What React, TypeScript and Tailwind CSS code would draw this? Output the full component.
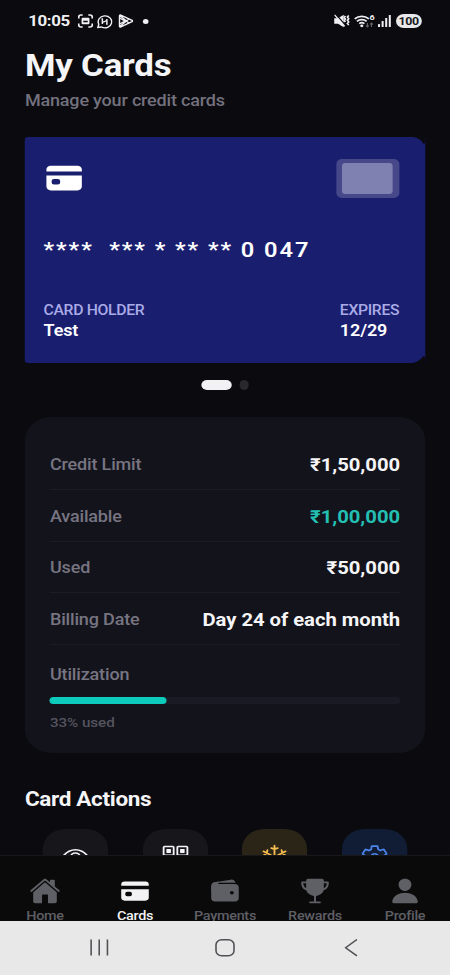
import React from 'react';
import {
  IoCard,
  IoEyeOutline,
  IoHome,
  IoPerson,
  IoQrCodeOutline,
  IoSettingsOutline,
  IoSnowOutline,
  IoTrophy,
  IoWallet,
} from 'react-icons/io5';

const DETAILS = [
  { label: 'Credit Limit', value: '₹1,50,000', color: 'text-[#f5f5f7]' },
  { label: 'Available', value: '₹1,00,000', color: 'text-[#22bfb2]' },
  { label: 'Used', value: '₹50,000', color: 'text-[#f5f5f7]' },
  { label: 'Billing Date', value: 'Day 24 of each month', color: 'text-[#f5f5f7]' },
];

const ACTIONS = [
  { id: 'view', Icon: IoEyeOutline, style: 'bg-[#16161b] text-[#f5f5f7]' },
  { id: 'qr', Icon: IoQrCodeOutline, style: 'bg-[#16161b] text-[#f5f5f7]' },
  { id: 'freeze', Icon: IoSnowOutline, style: 'bg-[#2b2518] text-[#f7bd50]' },
  { id: 'settings', Icon: IoSettingsOutline, style: 'bg-[#111d35] text-[#4a86ee]' },
];

const TABS = [
  { label: 'Home', Icon: IoHome },
  { label: 'Cards', Icon: IoCard },
  { label: 'Payments', Icon: IoWallet },
  { label: 'Rewards', Icon: IoTrophy },
  { label: 'Profile', Icon: IoPerson },
];

const StatusBar = () => (
  <div className="flex h-[42px] shrink-0 items-center justify-between px-[25px] text-[#f0f0f2]">
    <div className="flex items-center">
      <span className="w-[38px] text-[15px] leading-[42px] font-bold tracking-[-0.3px]">10:05</span>
      <svg className="ml-[5.500px] h-[14px] w-[14px]" viewBox="0 0 14 14" fill="none" stroke="currentColor" strokeWidth="1.5">
        <path d="M1 4.500V3a2 2 0 0 1 2-2h1.500M9.500 1H11a2 2 0 0 1 2 2v1.500M13 9.500V11a2 2 0 0 1-2 2H9.500M4.500 13H3a2 2 0 0 1-2-2V9.500" />
        <rect x="3.500" y="3.800" width="7" height="6.400" rx="1" fill="currentColor" stroke="none" />
        <path d="M5 7.500h4" stroke="#0a0a0f" strokeWidth="1.400" />
      </svg>
      <svg className="ml-[3px] h-[15px] w-[14px]" viewBox="0 0 14 15" fill="none" stroke="currentColor" strokeWidth="1.3">
        <path d="M1 13.5l.8-3.3A6 6 0 1 1 4.3 13z" />
        <path d="M5 5v5M9 5v5M5 8.5l4-2M4.200 5h1.400M8.300 10h1.400" />
      </svg>
      <svg className="ml-[5px] h-[14px] w-[14px]" viewBox="0 0 14 14" fill="none" stroke="currentColor" strokeWidth="1.3" strokeLinejoin="round">
        <path d="M1.200 1.800v10.400a.8.8 0 0 0 1.200.7l10-5.300a.7.7 0 0 0 0-1.200L2.400 1.100a.8.8 0 0 0-1.200.7zM1.500 1.500L9.500 9M1.500 12.500L9.500 5M1.500 4L6 7 1.500 10" />
      </svg>
      <span className="ml-[8px] h-[5px] w-[5px] rounded-full bg-current" />
    </div>
    <div className="flex items-center">
      <svg className="h-[14px] w-[14px]" viewBox="0 0 14 14" fill="none" stroke="currentColor" strokeWidth="1.5">
        <path d="M0 4.300h3.500L8.500 .8v12.400L3.500 9.700H0z" fill="currentColor" stroke="none" />
        <path d="M1.200 0l9 11.300" stroke="#0a0a0f" strokeWidth="1.200" />
        <path d="M.4 .8l9 11.500" strokeWidth="1.200" />
        <path d="M10 2l-1 1.500 1 1.500-1 1.500 1 1.500M13 1.500l-1.200 1.600 1.200 1.600-1.200 1.600 1.200 1.600-1.200 1.600 1.200 1.600" />
      </svg>
      <svg className="ml-[4px] h-[18px] w-[19px] overflow-visible" viewBox="0 -2 19 18" fill="none" stroke="currentColor" strokeWidth="1.600">
        <path d="M.3 4.800a9.300 9.300 0 0 1 12.600 0M2.300 7.300a6.400 6.400 0 0 1 8.600 0M4.300 9.600a3.600 3.600 0 0 1 4.600 0" />
        <circle cx="6.600" cy="11.800" r="1.400" fill="currentColor" stroke="none" />
        <path d="M11.600 9v4M10.300 11.500l1.300 1.500 1.300-1.500M15.200 13V9M14 10.500L15.200 9l1.300 1.500" stroke="#66666b" strokeWidth="1" />
        <text x="13.400" y="6" fill="currentColor" stroke="none" className="text-[8px] font-bold">6</text>
      </svg>
      <svg className="ml-[2px] h-[12px] w-[12px]" viewBox="0 0 12 12" fill="currentColor">
        <rect x="0" y="9" width="1.800" height="3" rx=".5" />
        <rect x="3.200" y="6" width="1.800" height="6" rx=".5" />
        <rect x="6.400" y="3" width="1.800" height="9" rx=".5" />
        <rect x="9.600" y="0" width="1.800" height="12" rx=".5" />
      </svg>
      <span className="ml-[4px] flex h-[14px] w-[23.500px] items-center justify-center rounded-full bg-[#e9e9eb] text-[11px] leading-none font-bold tracking-[-0.3px] text-[#18181b]">
        100
      </span>
    </div>
  </div>
);

const CreditCard = () => (
  <div className="relative mt-[26px] flex h-[225.500px] shrink-0 flex-col rounded-l-[3px] bg-[#1a1e6f] px-[16.500px]">
    <svg className="absolute top-0 right-0 h-[7px] w-[11px]" viewBox="0 0 11 7" fill="#0a0a0f">
      <path d="M0 0h11v6l-1.500 1C7.500 3 4.500 .8 0 0z" />
    </svg>
    <svg className="absolute right-0 bottom-0 h-[7px] w-[11px]" viewBox="0 0 11 7" fill="#0a0a0f">
      <path d="M0 7h11V1L9.500 0C7.500 3 4 6 0 7z" />
    </svg>
    <div className="flex justify-between pt-[22px]">
      <IoCard className="mt-[1px] h-[36px] w-[36px] text-white" />
      <div className="mr-[6.500px] h-[39px] w-[56px] rounded-[5px] bg-[#46488a] px-[5.500px] py-[4px]">
        <div className="h-full rounded-[3px] bg-[#7f81b0]" />
      </div>
    </div>
    <div className="mt-[39px] text-[21px] leading-[26px] font-semibold tracking-[1.720px] whitespace-pre text-white">
      {'****  *** * ** ** 0 047'}
    </div>
    <div className="mt-[37px] flex justify-between pr-[6.500px]">
      <div>
        <p className="text-[14px] leading-[20px] font-medium tracking-[-0.3px] text-[#a9abe6]">CARD HOLDER</p>
        <p className="text-[16px] leading-[21px] font-semibold tracking-[-0.1px] text-white">Test</p>
      </div>
      <div>
        <p className="text-[14px] leading-[20px] font-medium tracking-[-0.3px] text-[#a9abe6]">EXPIRES</p>
        <p className="text-[16px] leading-[21px] font-semibold tracking-[-0.1px] text-white">12/29</p>
      </div>
    </div>
  </div>
);

const CardDetails = () => (
  <div className="mt-[27px] h-[336px] shrink-0 rounded-[24px] bg-[#13131b] px-[22.200px] pt-[21.500px]">
    {DETAILS.map(({ label, value, color }) => (
      <div key={label} className="flex h-[51.750px] items-center justify-between border-b border-[#1c1c25] pt-[2px]">
        <span className="pt-px text-[16px] font-medium tracking-[-0.14px] text-[#777582]">{label}</span>
        <span className={`text-[18px] font-bold tracking-[-0.03px] ${color}`}>{value}</span>
      </div>
    ))}
    <p className="mt-[19.500px] text-[16px] leading-[20px] font-medium tracking-[-0.14px] text-[#777582]">Utilization</p>
    <div className="mt-[12px] h-[7px] rounded-full bg-[#1a1a24]">
      <div className="h-full rounded-full bg-[#0ccbbd]" style={{ width: `${(50000 / 150000) * 100}%` }} />
    </div>
    <p className="mt-[9px] text-[13.500px] leading-[18px] font-medium tracking-[-0.05px] text-[#55545f]">33% used</p>
  </div>
);

const TabBar = () => (
  <div className="flex h-[66px] shrink-0 overflow-hidden border-t border-[#18181b] bg-[#0a0a0a]">
    {TABS.map(({ label, Icon }) => (
      <div
        key={label}
        className={`flex flex-1 flex-col items-center pt-[21px] ${label === 'Cards' ? 'text-[#f2f2f4]' : 'text-[#5f5f66]'}`}
      >
        <Icon className="h-[28px] w-[28px] shrink-0" />
        <span className="mt-[2px] text-[12.800px] leading-[18px] font-medium tracking-[-0.25px]">{label}</span>
      </div>
    ))}
  </div>
);

const SystemNav = () => (
  <div className="flex h-[54px] shrink-0 bg-[#e8e8e8] pt-[18px] pl-[80px] text-[#505055]">
    <svg className="h-[17px] w-[17px]" viewBox="0 0 17 17" stroke="currentColor" strokeWidth="1.400">
      <path d="M1 .5v16M8.200 .5v16M15.500 .5v16" />
    </svg>
    <svg className="ml-[94px] h-[18px] w-[18px]" viewBox="0 0 18 18" fill="none" stroke="currentColor" strokeWidth="1.400">
      <rect x="1" y=".7" width="16" height="16" rx="5" />
    </svg>
    <svg className="ml-[97px] h-[18px] w-[12px]" viewBox="0 0 12 18" fill="none" stroke="currentColor" strokeWidth="1.400">
      <path d="M11.300 .5L1.200 8.700l10.100 8.200" />
    </svg>
  </div>
);

const App: React.FC = () => {
  return (
    <div className="h-[975px] w-[450px] overflow-hidden bg-[#0a0a0f] font-['Roboto',sans-serif]">
      <div className="flex h-[975px] w-[400px] origin-top-left scale-x-[1.125] flex-col">
        <StatusBar />
        <div className="flex min-h-0 flex-1 flex-col overflow-hidden px-[22.200px]">
          <h1 className="mt-[4px] text-[31px] leading-[40px] font-bold tracking-[-0.2px] text-[#f5f5f7]">My Cards</h1>
          <p className="mt-[5px] text-[16px] leading-[20px] font-medium tracking-[-0.17px] text-[#73717d]">
            Manage your credit cards
          </p>
          <CreditCard />
          <div className="mt-[17.500px] flex shrink-0 justify-center gap-[6.500px]">
            <span className="h-[9.500px] w-[27px] rounded-full bg-[#f2f2f4]" />
            <span className="h-[9.500px] w-[8.500px] rounded-full bg-[#28282d]" />
          </div>
          <CardDetails />
          <h2 className="mt-[33px] text-[20px] leading-[26px] font-bold tracking-[-0.3px] text-[#f5f5f7]">Card Actions</h2>
          <div className="mt-[17px] flex shrink-0">
            {ACTIONS.map(({ id, Icon, style }) => (
              <div key={id} className="flex flex-1 justify-center">
                <div className={`flex h-[64px] w-[58px] justify-center rounded-[20px] pt-[15px] ${style}`}>
                  <Icon className="h-[26px] w-[26px]" />
                </div>
              </div>
            ))}
          </div>
        </div>
        <TabBar />
        <SystemNav />
      </div>
    </div>
  );
};

export default App;
